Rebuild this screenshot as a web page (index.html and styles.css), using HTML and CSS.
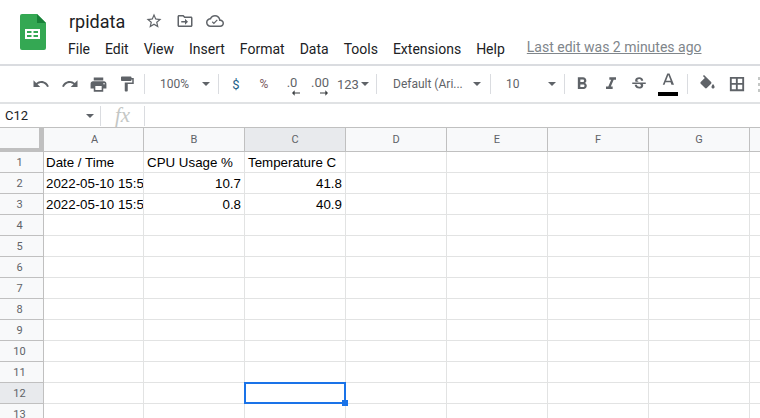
FILE: index.html
```html
<!DOCTYPE html>
<html lang="en">
<head>
  <meta charset="UTF-8" />
  <title>rpidata - Google Sheets</title>
  <link rel="stylesheet" href="styles.css">
</head>
<body>

  <!-- title + menu -->
  <header class="header">
    <svg class="logo" width="26" height="36" viewBox="0 0 26 36">
      <path d="M2 0h15l9 9v25a2 2 0 0 1-2 2H2a2 2 0 0 1-2-2V2a2 2 0 0 1 2-2z" fill="#34a853"/>
      <path d="M17 0l9 9h-9z" fill="#188038"/>
      <path d="M5 15h15v10H5zM7 17v2h4.500v-2zM13.500 17v2H18v-2zM7 21v2h4.500v-2zM13.500 21v2H18v-2z" fill="#fff" fill-rule="evenodd"/>
    </svg>
    <div class="header-main">
      <div class="title-row">
        <span class="doc-title">rpidata</span>
        <svg class="title-icon" width="18" height="18" viewBox="0 0 24 24"><path d="M22 9.240l-7.190-.62L12 2 9.190 8.630 2 9.240l5.460 4.730L5.820 21 12 17.270 18.180 21l-1.630-7.030L22 9.240zM12 15.400l-3.760 2.270 1-4.280-3.320-2.880 4.380-.38L12 6.100l1.710 4.040 4.380.38-3.320 2.880 1 4.280L12 15.400z"/></svg>
        <svg class="title-icon" width="18" height="18" viewBox="0 0 24 24"><path d="M20 6h-8l-2-2H4c-1.100 0-2 .9-2 2v12c0 1.100.9 2 2 2h16c1.100 0 2-.9 2-2V8c0-1.100-.9-2-2-2zm0 12H4V6h5.170l2 2H20v10zm-8-4H7v-2h5V9l4 4-4 4v-3z"/></svg>
        <svg class="title-icon" width="18" height="18" viewBox="0 0 24 24"><path d="M19.350 10.040C18.670 6.590 15.640 4 12 4 9.110 4 6.600 5.640 5.350 8.040 2.340 8.360 0 10.910 0 14c0 3.310 2.690 6 6 6h13c2.760 0 5-2.240 5-5 0-2.640-2.050-4.780-4.650-4.960zM19 18H6c-2.210 0-4-1.790-4-4s1.790-4 4-4h.71C7.370 7.690 9.480 6 12 6c3.040 0 5.500 2.460 5.500 5.500v.5H19c1.660 0 3 1.340 3 3s-1.340 3-3 3z"/><path d="M10.500 16.200l-2.700-2.700 1.100-1.100 1.600 1.600 4-4 1.100 1.100z"/></svg>
      </div>
      <nav class="menu">
        <span>File</span>
        <span>Edit</span>
        <span>View</span>
        <span>Insert</span>
        <span>Format</span>
        <span>Data</span>
        <span>Tools</span>
        <span>Extensions</span>
        <span>Help</span>
        <a class="last-edit">Last edit was 2 minutes ago</a>
      </nav>
    </div>
  </header>

  <!-- toolbar -->
  <div class="toolbar">
    <span class="tool"><svg width="18" height="18" viewBox="0 0 24 24"><path d="M12.500 8c-2.650 0-5.050.99-6.900 2.600L2 7v9h9l-3.620-3.620c1.390-1.160 3.160-1.880 5.120-1.880 3.540 0 6.550 2.310 7.600 5.500l2.370-.78C21.080 11.030 17.150 8 12.500 8z"/></svg></span>
    <span class="tool"><svg width="18" height="18" viewBox="0 0 24 24"><path d="M18.400 10.600C16.550 8.990 14.150 8 11.500 8c-4.650 0-8.580 3.030-9.960 7.220L3.900 16c1.050-3.190 4.050-5.500 7.600-5.500 1.950 0 3.730.72 5.120 1.880L13 16h9V7l-3.600 3.600z"/></svg></span>
    <span class="tool"><svg width="19" height="19" viewBox="0 0 24 24"><path d="M19 8H5c-1.660 0-3 1.340-3 3v6h4v4h12v-4h4v-6c0-1.660-1.340-3-3-3zm-3 11H8v-5h8v5zm3-7c-.55 0-1-.45-1-1s.45-1 1-1 1 .45 1 1-.45 1-1 1zm-1-9H6v4h12V3z"/></svg></span>
    <span class="tool"><svg width="18" height="18" viewBox="0 0 24 24"><path d="M18 4V3c0-.55-.45-1-1-1H5c-.55 0-1 .45-1 1v4c0 .55.45 1 1 1h12c.55 0 1-.45 1-1V6h1v4H9v11c0 .55.45 1 1 1h2c.55 0 1-.45 1-1v-9h8V4h-3z"/></svg></span>
    <span class="sep sep-a"></span>
    <span class="drop drop-zoom"><span>100%</span><i class="arrow"></i></span>
    <span class="sep"></span>
    <span class="tool tool-text dollar">$</span>
    <span class="tool tool-text percent">%</span>
    <span class="tool tool-text decimal">.0<svg class="dec-arrow" width="8" height="6" viewBox="0 0 9 6"><path d="M9 2.500H3V0L0 3l3 3V3.500h6z"/></svg></span>
    <span class="tool tool-text decimal">.00<svg class="dec-arrow" width="8" height="6" viewBox="0 0 9 6"><path d="M0 2.500h6V0l3 3-3 3V3.500H0z"/></svg></span>
    <span class="drop drop-num"><span>123</span><i class="arrow"></i></span>
    <span class="sep"></span>
    <span class="drop drop-font"><span>Default (Ari...</span><i class="arrow"></i></span>
    <span class="sep"></span>
    <span class="drop drop-size"><span>10</span><i class="arrow"></i></span>
    <span class="sep"></span>
    <span class="tool tool-b"><svg width="20" height="20" viewBox="0 0 24 24"><path d="M15.600 10.790c.97-.67 1.650-1.770 1.650-2.790 0-2.260-1.750-4-4-4H7v14h7.040c2.090 0 3.710-1.700 3.710-3.790 0-1.520-.86-2.820-2.150-3.420zM10 6.500h3c.83 0 1.500.67 1.500 1.500s-.67 1.500-1.500 1.500h-3v-3zm3.500 9H10v-3h3.500c.83 0 1.500.67 1.500 1.500s-.67 1.500-1.500 1.500z"/></svg></span>
    <span class="tool"><svg width="20" height="20" viewBox="0 0 24 24"><path d="M10 4v3h2.210l-3.420 8H6v3h8v-3h-2.210l3.420-8H18V4z"/></svg></span>
    <span class="tool"><svg width="18" height="18" viewBox="0 0 24 24"><path d="M6.850 7.080C6.850 4.370 9.450 3 12.240 3c1.640 0 3 .49 3.900 1.280.77.65 1.460 1.730 1.460 3.240h-3.010c0-.31-.05-.59-.15-.85-.29-.86-1.200-1.280-2.250-1.280-1.860 0-2.340 1.020-2.340 1.700 0 .48.25.88.74 1.210.38.25.77.48 1.410.7H7.390c-.21-.34-.54-.89-.54-1.920zM21 12v-2H3v2h9.620c1.150.45 1.960.75 1.960 1.970 0 1-.81 1.670-2.280 1.670-1.540 0-2.930-.54-2.930-2.510H6.400c0 .55.08 1.130.24 1.580.81 2.290 3.290 3.300 5.670 3.300 2.270 0 5.300-.89 5.300-4.050 0-.3-.01-1.160-.48-1.960H21z"/></svg></span>
    <span class="tool tool-color"><svg width="18" height="18" viewBox="0 0 24 24"><path d="M11 2L5 17h2.400l1.200-3.200h6.800l1.200 3.200H20L14 2h-3zm-1.500 9.500L12.500 4l3 7.500h-6z"/></svg><i class="color-bar"></i></span>
    <span class="sep sep-b"></span>
    <span class="tool tool-fill"><svg width="19" height="19" viewBox="0 0 24 24"><path d="M16.560 8.940L7.620 0 6.210 1.410l2.380 2.380-5.150 5.150c-.59.59-.59 1.540 0 2.120l5.500 5.500c.29.29.68.44 1.060.44s.77-.15 1.060-.44l5.500-5.500c.59-.58.59-1.530 0-2.120zM19 11.500s-2 2.170-2 3.500c0 1.100.9 2 2 2s2-.9 2-2c0-1.330-2-3.500-2-3.500z"/></svg></span>
    <span class="tool tool-borders"><svg width="18" height="18" viewBox="0 0 24 24"><path d="M2.500 2.500v19h19v-19h-19zm8 16.500H5v-6h5.500v6zm0-8.500H5V5h5.500v5.500zM19 19h-6v-6h6v6zm0-8.500h-6V5h6v5.500z"/></svg></span>
    <span class="more-dots"></span>
  </div>

  <!-- name box + formula -->
  <div class="formula-bar">
    <div class="name-box"><span>C12</span><i class="arrow"></i></div>
    <div class="fx">fx</div>
    <div class="formula-input"></div>
  </div>

  <!-- sheet -->
  <div class="sheet">
    <div class="row col-heads">
      <div class="corner"></div>
      <div class="cell">A</div><div class="cell">B</div><div class="cell selected">C</div><div class="cell">D</div><div class="cell">E</div><div class="cell">F</div><div class="cell">G</div><div class="cell"></div>
    </div>
    <div class="row">
      <div class="row-head">1</div>
      <div class="cell">Date / Time</div><div class="cell">CPU Usage %</div><div class="cell">Temperature C</div><div class="cell"></div><div class="cell"></div><div class="cell"></div><div class="cell"></div><div class="cell"></div>
    </div>
    <div class="row">
      <div class="row-head">2</div>
      <div class="cell">2022-05-10 15:5</div><div class="cell num">10.7</div><div class="cell num">41.8</div><div class="cell"></div><div class="cell"></div><div class="cell"></div><div class="cell"></div><div class="cell"></div>
    </div>
    <div class="row">
      <div class="row-head">3</div>
      <div class="cell">2022-05-10 15:5</div><div class="cell num">0.8</div><div class="cell num">40.9</div><div class="cell"></div><div class="cell"></div><div class="cell"></div><div class="cell"></div><div class="cell"></div>
    </div>
    <div class="row"><div class="row-head">4</div><div class="cell"></div><div class="cell"></div><div class="cell"></div><div class="cell"></div><div class="cell"></div><div class="cell"></div><div class="cell"></div><div class="cell"></div></div>
    <div class="row"><div class="row-head">5</div><div class="cell"></div><div class="cell"></div><div class="cell"></div><div class="cell"></div><div class="cell"></div><div class="cell"></div><div class="cell"></div><div class="cell"></div></div>
    <div class="row"><div class="row-head">6</div><div class="cell"></div><div class="cell"></div><div class="cell"></div><div class="cell"></div><div class="cell"></div><div class="cell"></div><div class="cell"></div><div class="cell"></div></div>
    <div class="row"><div class="row-head">7</div><div class="cell"></div><div class="cell"></div><div class="cell"></div><div class="cell"></div><div class="cell"></div><div class="cell"></div><div class="cell"></div><div class="cell"></div></div>
    <div class="row"><div class="row-head">8</div><div class="cell"></div><div class="cell"></div><div class="cell"></div><div class="cell"></div><div class="cell"></div><div class="cell"></div><div class="cell"></div><div class="cell"></div></div>
    <div class="row"><div class="row-head">9</div><div class="cell"></div><div class="cell"></div><div class="cell"></div><div class="cell"></div><div class="cell"></div><div class="cell"></div><div class="cell"></div><div class="cell"></div></div>
    <div class="row"><div class="row-head">10</div><div class="cell"></div><div class="cell"></div><div class="cell"></div><div class="cell"></div><div class="cell"></div><div class="cell"></div><div class="cell"></div><div class="cell"></div></div>
    <div class="row"><div class="row-head">11</div><div class="cell"></div><div class="cell"></div><div class="cell"></div><div class="cell"></div><div class="cell"></div><div class="cell"></div><div class="cell"></div><div class="cell"></div></div>
    <div class="row">
      <div class="row-head selected">12</div>
      <div class="cell"></div><div class="cell"></div><div class="cell active"><i class="handle"></i></div><div class="cell"></div><div class="cell"></div><div class="cell"></div><div class="cell"></div><div class="cell"></div>
    </div>
    <div class="row"><div class="row-head">13</div><div class="cell"></div><div class="cell"></div><div class="cell"></div><div class="cell"></div><div class="cell"></div><div class="cell"></div><div class="cell"></div><div class="cell"></div></div>
  </div>

</body>
</html>
```

FILE: styles.css
```css
* {
  box-sizing: border-box;
}

html, body {
  height: 100%;
}

body {
  margin: 0;
  overflow: hidden;
  background: #fff;
  font-family: 'Roboto', 'Liberation Sans', sans-serif;
  color: #3c4043;
}

svg {
  display: block;
  fill: #5f6368;
}

/* header */
.header {
  display: flex;
  height: 66px;
  padding: 14px 0 0 20px;
  border-bottom: 2px solid #dadce0;
}

.logo {
  flex: none;
}

.header-main {
  margin-left: 22px;
  margin-top: -5px;
}

.title-row {
  display: flex;
  align-items: center;
  height: 24px;
  margin-left: 1px;
}

.doc-title {
  width: 76px;
  font-size: 18px;
  color: #202124;
}

.title-icon {
  margin-right: 12.5px;
}

.menu {
  display: flex;
  align-items: center;
  gap: 15px;
  margin-top: 7px;
  font-size: 14px;
  line-height: 18px;
  color: #202124;
}

.last-edit {
  margin-left: 7px;
  margin-top: -4px;
  color: #80868b;
  text-decoration: underline;
}

/* toolbar */
.toolbar {
  display: flex;
  align-items: center;
  height: 38px;
  padding-left: 27px;
  border-bottom: 2px solid #e0e2e4;
  font-size: 12px;
  color: #5f6368;
}

.tool {
  position: relative;
  display: flex;
  flex: none;
  align-items: center;
  justify-content: center;
  width: 28.5px;
  height: 28px;
}

.tool-text {
  width: 28px;
  font-size: 12px;
}

.dollar {
  margin-left: 3px;
  font-size: 13px;
  color: #1c5f8a;
}

.percent {
  color: #7b5a5f;
}

.decimal {
  padding-bottom: 3px;
  font-size: 13px;
}

.dec-arrow {
  position: absolute;
  left: 14px;
  bottom: 2px;
  fill: #3c4043;
}

.sep {
  flex: none;
  width: 1px;
  height: 20px;
  background: #dadce0;
}

.sep-a {
  margin-left: 3px;
}

.drop {
  display: flex;
  flex: none;
  align-items: center;
  justify-content: space-between;
  height: 28px;
  font-size: 12px;
}

.drop-zoom {
  width: 73px;
  padding: 0 8px 0 15px;
}

.drop-num {
  width: 32px;
  margin: 0 7px 0 3px;
  font-size: 13px;
}

.drop-font {
  width: 113px;
  padding: 0 9px 0 16px;
}

.drop-size {
  width: 73px;
  padding: 0 8px 0 15px;
}

.arrow {
  flex: none;
  width: 0;
  height: 0;
  border-top: 4px solid #5f6368;
  border-left: 4px solid transparent;
  border-right: 4px solid transparent;
}

.tool-b {
  margin-left: 3px;
}

.tool-color {
  padding-bottom: 6px;
}

.color-bar {
  position: absolute;
  left: 4px;
  right: 4px;
  bottom: 2px;
  height: 4px;
  background: #000;
}

.sep-b {
  margin-left: 5px;
}

.tool-fill {
  margin-left: 5px;
}

.tool-borders {
  margin-left: 1px;
}

.more-dots {
  flex: none;
  width: 3px;
  height: 15px;
  margin-left: 7px;
  border-left: 3px dotted #c4c7c5;
}

/* formula bar */
.formula-bar {
  display: flex;
  align-items: center;
  height: 24px;
  border-bottom: 1px solid #c0c0c0;
}

.name-box {
  display: flex;
  align-items: center;
  justify-content: space-between;
  width: 101px;
  height: 20px;
  padding: 0 6px 0 5px;
  border-right: 1px solid #dadce0;
  font-size: 13px;
  color: #202124;
}

.fx {
  width: 44px;
  height: 20px;
  border-right: 1px solid #dadce0;
  font-family: 'Liberation Serif', serif;
  font-style: italic;
  font-size: 21px;
  line-height: 18px;
  text-align: center;
  color: #c4c7c5;
}

/* sheet */
.sheet {
  display: flex;
  flex-direction: column;
}

.row {
  display: flex;
  flex: none;
  height: 21px;
}

.col-heads {
  height: 24px;
}

.corner {
  flex: none;
  width: 44px;
  background: #f8f9fa;
  border-right: 5px solid #c0c0c0;
  border-bottom: 4px solid #c0c0c0;
}

.row-head {
  flex: none;
  width: 44px;
  padding-right: 4px;
  background: #f8f9fa;
  border-right: 1px solid #c0c0c0;
  border-bottom: 1px solid #c0c0c0;
  font-size: 11px;
  line-height: 21px;
  text-align: center;
  color: #5f6368;
}

.cell {
  position: relative;
  flex: none;
  width: 101px;
  padding: 0 3px;
  border-right: 1px solid #e2e3e3;
  border-bottom: 1px solid #e2e3e3;
  overflow: hidden;
  white-space: nowrap;
  font-family: 'Liberation Sans', Arial, sans-serif;
  font-size: 13.33px;
  line-height: 22px;
  color: #000;
}

/* column A is one pixel narrower than the rest */
.row > .cell:nth-child(2) {
  width: 100px;
  padding: 0 0 0 2px;
}

.num {
  text-align: right;
}

.col-heads .cell {
  background: #f8f9fa;
  border-right-color: #c0c0c0;
  border-bottom: 1px solid #c0c0c0;
  font-family: 'Roboto', sans-serif;
  font-size: 11px;
  line-height: 23px;
  text-align: center;
  color: #5f6368;
}

.col-heads .selected,
.row-head.selected {
  background: #e8eaed;
}

.active {
  overflow: visible;
}

.active::after {
  content: "";
  position: absolute;
  left: -1px;
  top: -1px;
  right: -1px;
  bottom: -1px;
  border: 2px solid #1a73e8;
}

.handle {
  position: absolute;
  z-index: 1;
  right: -3px;
  bottom: -3px;
  width: 6px;
  height: 6px;
  background: #1a73e8;
}
```
